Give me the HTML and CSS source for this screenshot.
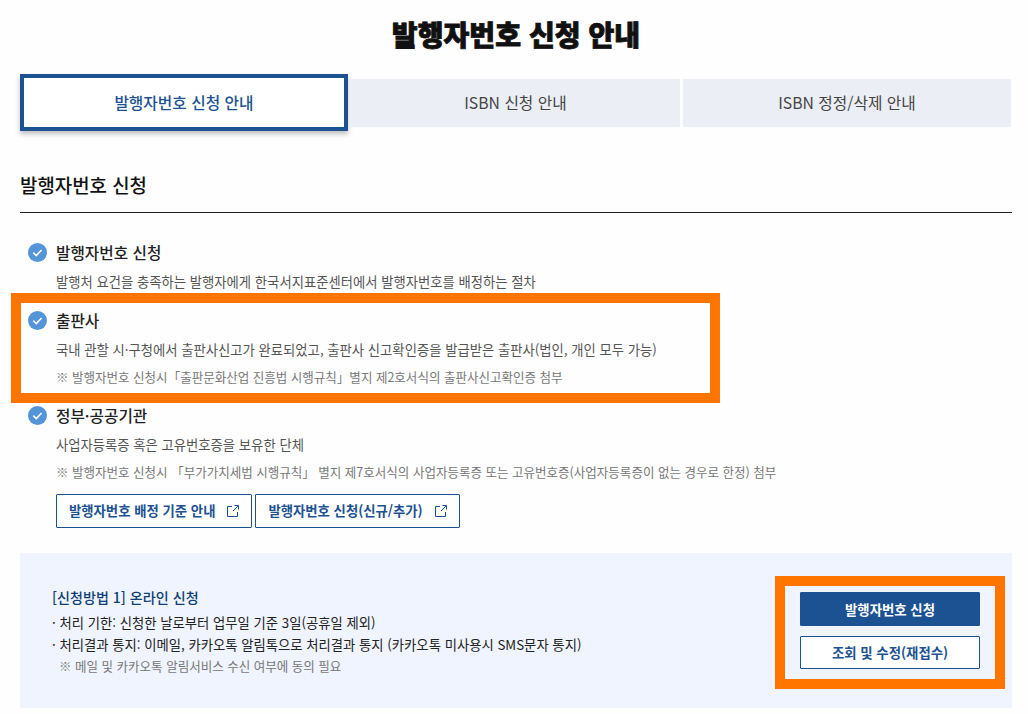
FILE: index.html
```html
<!DOCTYPE html>
<html lang="ko">
<head>
    <meta charset="UTF-8">
    <title>발행자번호 신청 안내</title>
    <link rel="stylesheet" href="styles.css">
</head>
<body>
    <svg class="symbols">
        <symbol id="check" viewBox="0 0 19 19">
            <circle cx="9.5" cy="9.5" r="9.5" fill="#5494d8"/>
            <path d="M5.3 9.6l3 2.9 5.3-5.5" fill="none" stroke="#fff" stroke-width="1.6"/>
        </symbol>
        <symbol id="link" viewBox="0 0 12 12">
            <path d="M5 1.5H.5v10h10V7M7.5.5h4v4M11.2.8L6 6" fill="none" stroke="currentColor" stroke-width="1"/>
        </symbol>
    </svg>

    <div class="container">
        <h1>발행자번호 신청 안내</h1>

        <ul class="tabs">
            <li class="active"><a>발행자번호 신청 안내</a></li>
            <li><a>ISBN 신청 안내</a></li>
            <li><a>ISBN 정정/삭제 안내</a></li>
        </ul>

        <h2>발행자번호 신청</h2>

        <ul class="guide">
            <li>
                <h3><svg class="check"><use href="#check"/></svg>발행자번호 신청</h3>
                <p>발행처 요건을 충족하는 발행자에게 한국서지표준센터에서 발행자번호를 배정하는 절차</p>
            </li>
            <li class="publisher">
                <h3><svg class="check"><use href="#check"/></svg>출판사</h3>
                <p>국내 관할 시·구청에서 출판사신고가 완료되었고, 출판사 신고확인증을 발급받은 출판사(법인, 개인 모두 가능)</p>
                <p class="note">※ 발행자번호 신청시「출판문화산업 진흥법 시행규칙」별지 제2호서식의 출판사신고확인증 첨부</p>
            </li>
            <li>
                <h3><svg class="check"><use href="#check"/></svg>정부·공공기관</h3>
                <p>사업자등록증 혹은 고유번호증을 보유한 단체</p>
                <p class="note">※ 발행자번호 신청시 「부가가치세법 시행규칙」 별지 제7호서식의 사업자등록증 또는 고유번호증(사업자등록증이 없는 경우로 한정) 첨부</p>
                <div class="links">
                    <a class="btn-link">발행자번호 배정 기준 안내<svg><use href="#link"/></svg></a>
                    <a class="btn-link">발행자번호 신청(신규/추가)<svg><use href="#link"/></svg></a>
                </div>
            </li>
        </ul>

        <div class="method">
            <div class="method-text">
                <h4>[신청방법 1] 온라인 신청</h4>
                <ul>
                    <li>처리 기한: 신청한 날로부터 업무일 기준 3일(공휴일 제외)</li>
                    <li>처리결과 통지: 이메일, 카카오톡 알림톡으로 처리결과 통지 (카카오톡 미사용시 SMS문자 통지)</li>
                </ul>
                <p class="note">※ 메일 및 카카오톡 알림서비스 수신 여부에 동의 필요</p>
            </div>
            <div class="method-btns">
                <a class="btn fill">발행자번호 신청</a>
                <a class="btn">조회 및 수정(재접수)</a>
            </div>
        </div>
    </div>
</body>
</html>
```

FILE: styles.css
```css
* {
    margin: 0;
    padding: 0;
    box-sizing: border-box;
}

body {
    background: #fefefe;
    color: #222;
    font-family: 'Noto Sans CJK KR', sans-serif;
    overflow: hidden;
}

ul {
    list-style: none;
}

.symbols {
    display: none;
}

.container {
    width: 1012px;
    padding-left: 20px;
}

h1 {
    height: 74px;
    padding-top: 13px;
    text-align: center;
    color: #111;
    font-size: 28.1px;
    font-weight: 900;
    line-height: 42px;
    -webkit-text-stroke: 0.8px #111;
}

/* tabs */
.tabs {
    display: grid;
    grid-template-columns: 328px 329px 328px;
    align-items: center;
    gap: 3px;
    height: 57px;
}

.tabs li {
    height: 48px;
    background: #ebeef5;
    color: #444;
    font-size: 15.75px;
    line-height: 47px;
    text-align: center;
}

.tabs .active {
    height: 57px;
    border: 4px solid #1c5291;
    background: #fff;
    color: #1c5291;
    font-weight: 500;
    line-height: 50px;
    box-shadow: 0 3px 5px rgba(0, 0, 0, 0.25);
}

h2 {
    height: 82px;
    padding-top: 40px;
    border-bottom: 1px solid #222;
    color: #111;
    font-size: 18.9px;
    font-weight: 500;
    line-height: 28px;
}

/* guide list */
.guide {
    padding: 26px 0 0 36px;
}

.guide li {
    position: relative;
    height: 68px;
}

.guide li.publisher {
    height: 95px;
}

.guide li:last-child {
    height: 151px;
}

.guide h3 {
    display: flex;
    align-items: center;
    height: 26px;
    margin-left: -28px;
    font-size: 15.7px;
    font-weight: 500;
}

.check {
    width: 19px;
    height: 19px;
    margin-right: 9px;
}

.guide p {
    padding-top: 5px;
    color: #555;
    font-size: 13.34px;
    line-height: 24px;
    white-space: nowrap;
}

.guide .note {
    padding-top: 3px;
    color: #777;
    font-size: 12.52px;
}

/* highlight frame round the publisher item */
.publisher::after {
    content: "";
    position: absolute;
    top: -14px;
    left: -45px;
    box-sizing: border-box;
    width: 709px;
    height: 110px;
    border: 10px solid #ff7500;
}

.links {
    display: flex;
    gap: 3px;
    padding-top: 10px;
}

.btn-link {
    display: flex;
    align-items: center;
    height: 34px;
    padding: 0 12px 1px;
    border: 1px solid #1c5291;
    border-radius: 1px;
    background: #fff;
    color: #1c5291;
    font-size: 13.36px;
    font-weight: 700;
}

.btn-link svg {
    width: 12px;
    height: 12px;
    margin-left: 12px;
}

/* application method */
.method {
    display: flex;
    justify-content: space-between;
    height: 155px;
    padding: 23px 7px 0 32px;
    background: #f0f4fe;
}

.method-text {
    padding-top: 8px;
    font-size: 13.34px;
}

.method h4 {
    height: 28px;
    color: #0f3f75;
    font-size: 14.1px;
    font-weight: 500;
    line-height: 26px;
}

.method li {
    display: flex;
    line-height: 22px;
}

.method li::before {
    content: "·";
    width: 7.5px;
}

.method .note {
    padding-left: 7px;
    color: #777;
    font-size: 12.52px;
    line-height: 20px;
}

.method-btns {
    display: flex;
    flex-direction: column;
    gap: 10px;
    width: 230px;
    height: 113px;
    padding: 6px 15px;
    border: 10px solid #ff7500;
}

.btn {
    height: 33px;
    border: 1px solid #1c5291;
    border-radius: 1px;
    background: #fff;
    color: #1c5291;
    font-size: 13.4px;
    font-weight: 700;
    line-height: 31px;
    text-align: center;
}

.btn.fill {
    height: 34px;
    background: #1c5291;
    color: #fff;
    line-height: 33px;
}
```
